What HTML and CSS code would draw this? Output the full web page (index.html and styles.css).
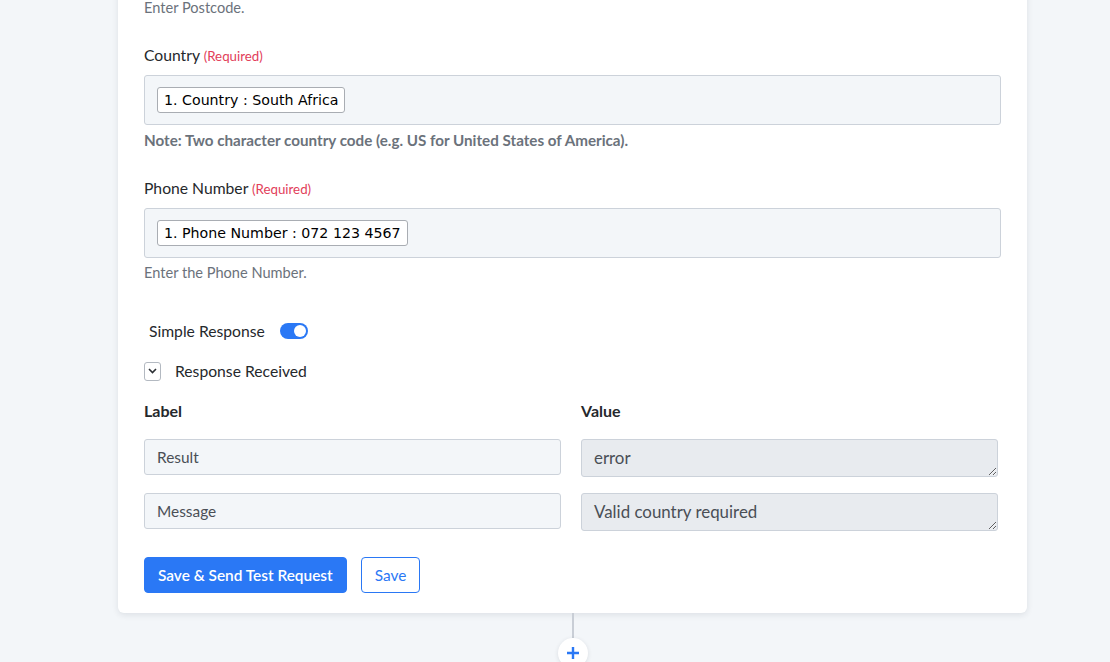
FILE: index.html
```html
<!DOCTYPE html>
<html lang="en">
<head>
    <meta charset="UTF-8">
    <title>Action Settings</title>
    <link rel="stylesheet" href="styles.css">
</head>
<body>
    <div class="canvas">
        <div class="card">
            <div class="field">
                <div class="help">Enter Postcode.</div>
            </div>

            <div class="field">
                <div class="label">Country <span class="req">(Required)</span></div>
                <div class="mapbox"><span class="chip">1. Country : South Africa</span></div>
                <div class="note">Note: Two character country code (e.g. US for United States of America).</div>
            </div>

            <div class="field">
                <div class="label">Phone Number <span class="req">(Required)</span></div>
                <div class="mapbox"><span class="chip">1. Phone Number : 072 123 4567</span></div>
                <div class="help">Enter the Phone Number.</div>
            </div>

            <div class="switchrow">
                <span>Simple Response</span>
                <span class="toggle"><span class="knob"></span></span>
            </div>

            <div class="collapserow">
                <span class="chevbox">
                    <svg width="9" height="6" viewBox="0 0 9 6"><path d="M1 1l3.5 3.5L8 1" fill="none" stroke="#2b2f33" stroke-width="1.6"/></svg>
                </span>
                <span>Response Received</span>
            </div>

            <div class="response">
                <div class="colhead">Label</div>
                <div class="colhead">Value</div>
                <input class="keyinput" type="text" value="Result" readonly>
                <textarea class="valinput" readonly>error</textarea>
                <input class="keyinput" type="text" value="Message" readonly>
                <textarea class="valinput" readonly>Valid country required</textarea>
            </div>

            <div class="actions">
                <button class="btn primary">Save &amp; Send Test Request</button>
                <button class="btn outline">Save</button>
            </div>
        </div>

        <div class="connector">
            <div class="stem"></div>
            <div class="addstep">
                <svg width="14" height="14" viewBox="0 0 14 14"><path d="M7 1v12M1 7h12" stroke="#2a78f5" stroke-width="2.4"/></svg>
            </div>
        </div>
    </div>
</body>
</html>
```

FILE: styles.css
```css
* {
    box-sizing: border-box;
}

body, html {
    margin: 0;
    padding: 0;
    background: #f3f6f9;
    font-family: Lato, "Open Sans", sans-serif;
    color: #25282c;
    overflow: hidden;
}

.canvas {
    padding-left: 118px;
    width: 1110px;
}

.card {
    width: 909px;
    margin-top: -20px;
    padding: 13px 26px 20px;
    background: #fff;
    border-radius: 6px;
    box-shadow: 0 2px 6px rgba(30,40,60,0.10);
}

.field {
    margin-bottom: 27px;
}

.label {
    font-size: 15.7px;
    line-height: 20px;
    margin-bottom: 9px;
}
.req {
    font-size: 13.3px;
    color: #e2405a;
}

.mapbox {
    height: 50px;
    background: #f3f6f9;
    border: 1px solid #ccd2da;
    border-radius: 3px;
    padding: 11px 12px;
}
.chip {
    display: inline-block;
    height: 26px;
    line-height: 24px;
    padding: 0 6px;
    background: #fff;
    border: 1px solid #a9adb3;
    border-radius: 3px;
    font-family: "DejaVu Sans", sans-serif;
    font-size: 14.2px;
    color: #000;
}

.help {
    font-size: 14.6px;
    line-height: 20px;
    margin-top: 5px;
    color: #6b727b;
}
.note {
    font-size: 15.2px;
    line-height: 20px;
    margin-top: 5px;
    padding-bottom: 1px;
    font-weight: bold;
    color: #6b727b;
}

.switchrow {
    display: flex;
    align-items: center;
    gap: 15px;
    height: 20px;
    margin-top: 38px;
    padding-left: 5px;
    font-size: 15.7px;
}
.toggle {
    display: flex;
    align-items: center;
    justify-content: flex-end;
    width: 28px;
    height: 16px;
    padding: 0 2px;
    border-radius: 8px;
    background: #2a78f5;
}
.knob {
    width: 12px;
    height: 12px;
    border-radius: 50%;
    background: #fff;
}

.collapserow {
    display: flex;
    align-items: center;
    gap: 14px;
    height: 20px;
    margin-top: 20px;
    font-size: 15.7px;
}
.chevbox {
    display: flex;
    align-items: center;
    justify-content: center;
    width: 17px;
    height: 19px;
    border: 1px solid #b3b9c1;
    border-radius: 3px;
}

.response {
    display: grid;
    grid-template-columns: 417px 417px;
    column-gap: 20px;
    row-gap: 16px;
    align-items: start;
    margin-top: 20px;
}
.colhead {
    font-size: 16px;
    font-weight: bold;
    line-height: 20px;
    margin-bottom: 2px;
}
.keyinput {
    width: 100%;
    height: 36px;
    margin: 0;
    padding: 0 12px;
    background: #f3f6f9;
    border: 1px solid #ccd2da;
    border-radius: 3px;
    font-family: Lato, "Open Sans", sans-serif;
    font-size: 15.4px;
    color: #4a4f56;
    outline: none;
}
.valinput {
    display: block;
    width: 100%;
    height: 38px;
    margin: 0;
    padding: 8px 12px;
    background: #e8ebef;
    border: 1px solid #ccd2da;
    border-radius: 3px;
    font-family: Lato, "Open Sans", sans-serif;
    font-size: 16.9px;
    line-height: 20px;
    color: #4a4f56;
    overflow: hidden;
    outline: none;
}

.actions {
    display: flex;
    gap: 14px;
    margin-top: 26px;
}
.btn {
    height: 36px;
    padding: 0 13px;
    border-radius: 4px;
    font-family: Lato, "Open Sans", sans-serif;
    font-size: 15.4px;
    cursor: pointer;
}
.primary {
    background: #2a78f5;
    border: 1px solid #2a78f5;
    color: #fff;
    font-weight: 600;
}
.outline {
    background: #fff;
    border: 1px solid #2a78f5;
    color: #2a78f5;
    padding: 0 13px;
}

.connector {
    width: 909px;
    display: flex;
    flex-direction: column;
    align-items: center;
}
.stem {
    width: 2px;
    height: 25px;
    background: #c9ced6;
}
.addstep {
    display: flex;
    align-items: center;
    justify-content: center;
    width: 30px;
    height: 30px;
    border-radius: 50%;
    background: #fff;
    box-shadow: 0 1px 4px rgba(30,40,60,0.12);
}
```
